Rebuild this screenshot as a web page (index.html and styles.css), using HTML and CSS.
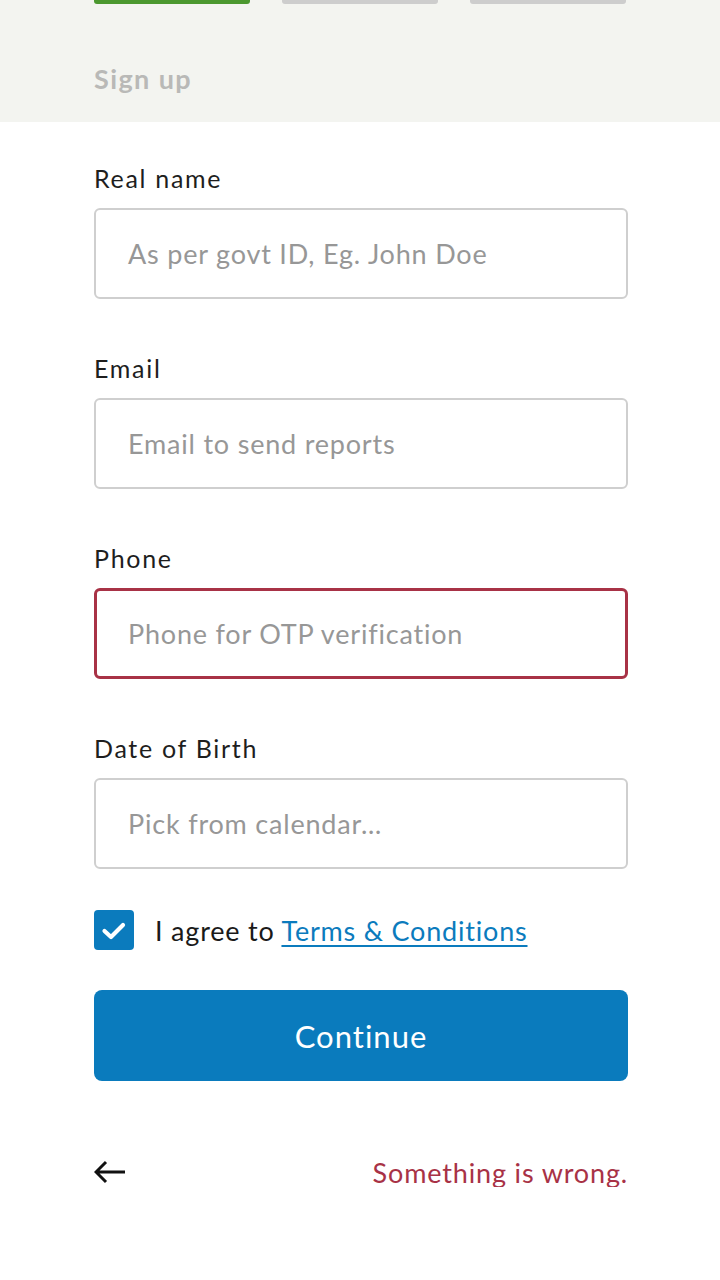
FILE: index.html
```html
<!DOCTYPE html>
<html lang="en">
<head>
<meta charset="utf-8">
<title>Sign up</title>
<link rel="stylesheet" href="styles.css">
</head>
<body>
<div class="page">
  <header class="header">
    <div class="progress">
      <span class="step step-done"></span>
      <span class="step"></span>
      <span class="step"></span>
    </div>
    <h1 class="title">Sign up</h1>
  </header>

  <main class="form">
    <div class="field">
      <label class="label">Real name</label>
      <div class="input"><span class="placeholder">As per govt ID, Eg. John Doe</span></div>
    </div>
    <div class="field">
      <label class="label">Email</label>
      <div class="input"><span class="placeholder">Email to send reports</span></div>
    </div>
    <div class="field">
      <label class="label">Phone</label>
      <div class="input input-error"><span class="placeholder">Phone for OTP verification</span></div>
    </div>
    <div class="field">
      <label class="label">Date of Birth</label>
      <div class="input"><span class="placeholder">Pick from calendar…</span></div>
    </div>

    <div class="agree">
      <span class="checkbox">
        <svg width="40" height="40" viewBox="0 0 40 40"><path d="M10.5 21 L17 27 L29 15" fill="none" stroke="#fff" stroke-width="4.2" stroke-linecap="round" stroke-linejoin="round"/></svg>
      </span>
      <span class="agree-text">I agree to <a class="link" href="#">Terms &amp; Conditions</a></span>
    </div>

    <button class="btn">Continue</button>

    <div class="footer">
      <svg class="back" width="32" height="26" viewBox="0 0 32 26"><path d="M31 13 H2.5 M12 3 L2 13 L12 23" fill="none" stroke="#111" stroke-width="3" stroke-linecap="butt" stroke-linejoin="miter"/></svg>
      <span class="error">Something is wrong.</span>
    </div>
  </main>
</div>
</body>
</html>
```

FILE: styles.css
```css
* { box-sizing: border-box; }
html, body { margin: 0; padding: 0; background: #fff; }
body {
  font-family: Lato, "Open Sans", "Liberation Sans", sans-serif;
  color: #1e1e1e;
  width: 720px;
}
.header {
  background: #f3f4f0;
  height: 122px;
  padding: 0 92px 0 94px;
}
.progress {
  display: flex;
  gap: 32px;
}
.step {
  display: block;
  width: 156px;
  height: 4px;
  background: #cdcdcd;
  border-radius: 0 0 3px 3px;
}
.step-done { background: #4b982f; }
.title {
  margin: 0;
  padding-top: 57px;
  font-size: 27px;
  line-height: 36px;
  font-weight: 700;
  letter-spacing: 1.4px;
  color: #b9b9b7;
}
.form {
  padding: 41px 92px 0 94px;
  display: flex;
  flex-direction: column;
}
.field {
  display: flex;
  flex-direction: column;
  gap: 15px;
  margin-bottom: 54px;
}
.field:nth-child(4) { margin-bottom: 41px; }
.label {
  font-size: 25px;
  line-height: 30px;
  letter-spacing: 1.7px;
  color: #1e1e1e;
}
.input {
  height: 91px;
  border: 2px solid #cfcfcf;
  border-radius: 6px;
  display: flex;
  align-items: center;
  padding-left: 32px;
}
.input-error { border: 3px solid #a83246; padding-left: 31px; }
.placeholder {
  font-size: 27px;
  letter-spacing: 0.8px;
  color: #979797;
}
.agree {
  display: flex;
  align-items: center;
  gap: 21px;
  height: 40px;
}
.checkbox {
  width: 40px;
  height: 40px;
  border-radius: 4px;
  background: #0b7bbd;
  display: block;
}
.checkbox svg { display: block; }
.agree-text {
  font-size: 27px;
  letter-spacing: 0.8px;
  color: #1a1a1a;
}
.link {
  color: #0b7bbd;
  text-decoration: underline;
  text-underline-offset: 4px;
  text-decoration-thickness: 2px;
}
.btn {
  margin-top: 40px;
  height: 91px;
  border: 0;
  border-radius: 8px;
  background: #0a7bbd;
  color: #fff;
  font-family: inherit;
  font-size: 31px;
  letter-spacing: 1px;
  padding: 0;
  width: 100%;
}
.footer {
  margin-top: 76px;
  display: flex;
  justify-content: space-between;
  align-items: center;
  height: 30px;
}
.back { display: block; }
.error {
  font-size: 27px;
  letter-spacing: 0.85px;
  color: #a83246;
}
```
